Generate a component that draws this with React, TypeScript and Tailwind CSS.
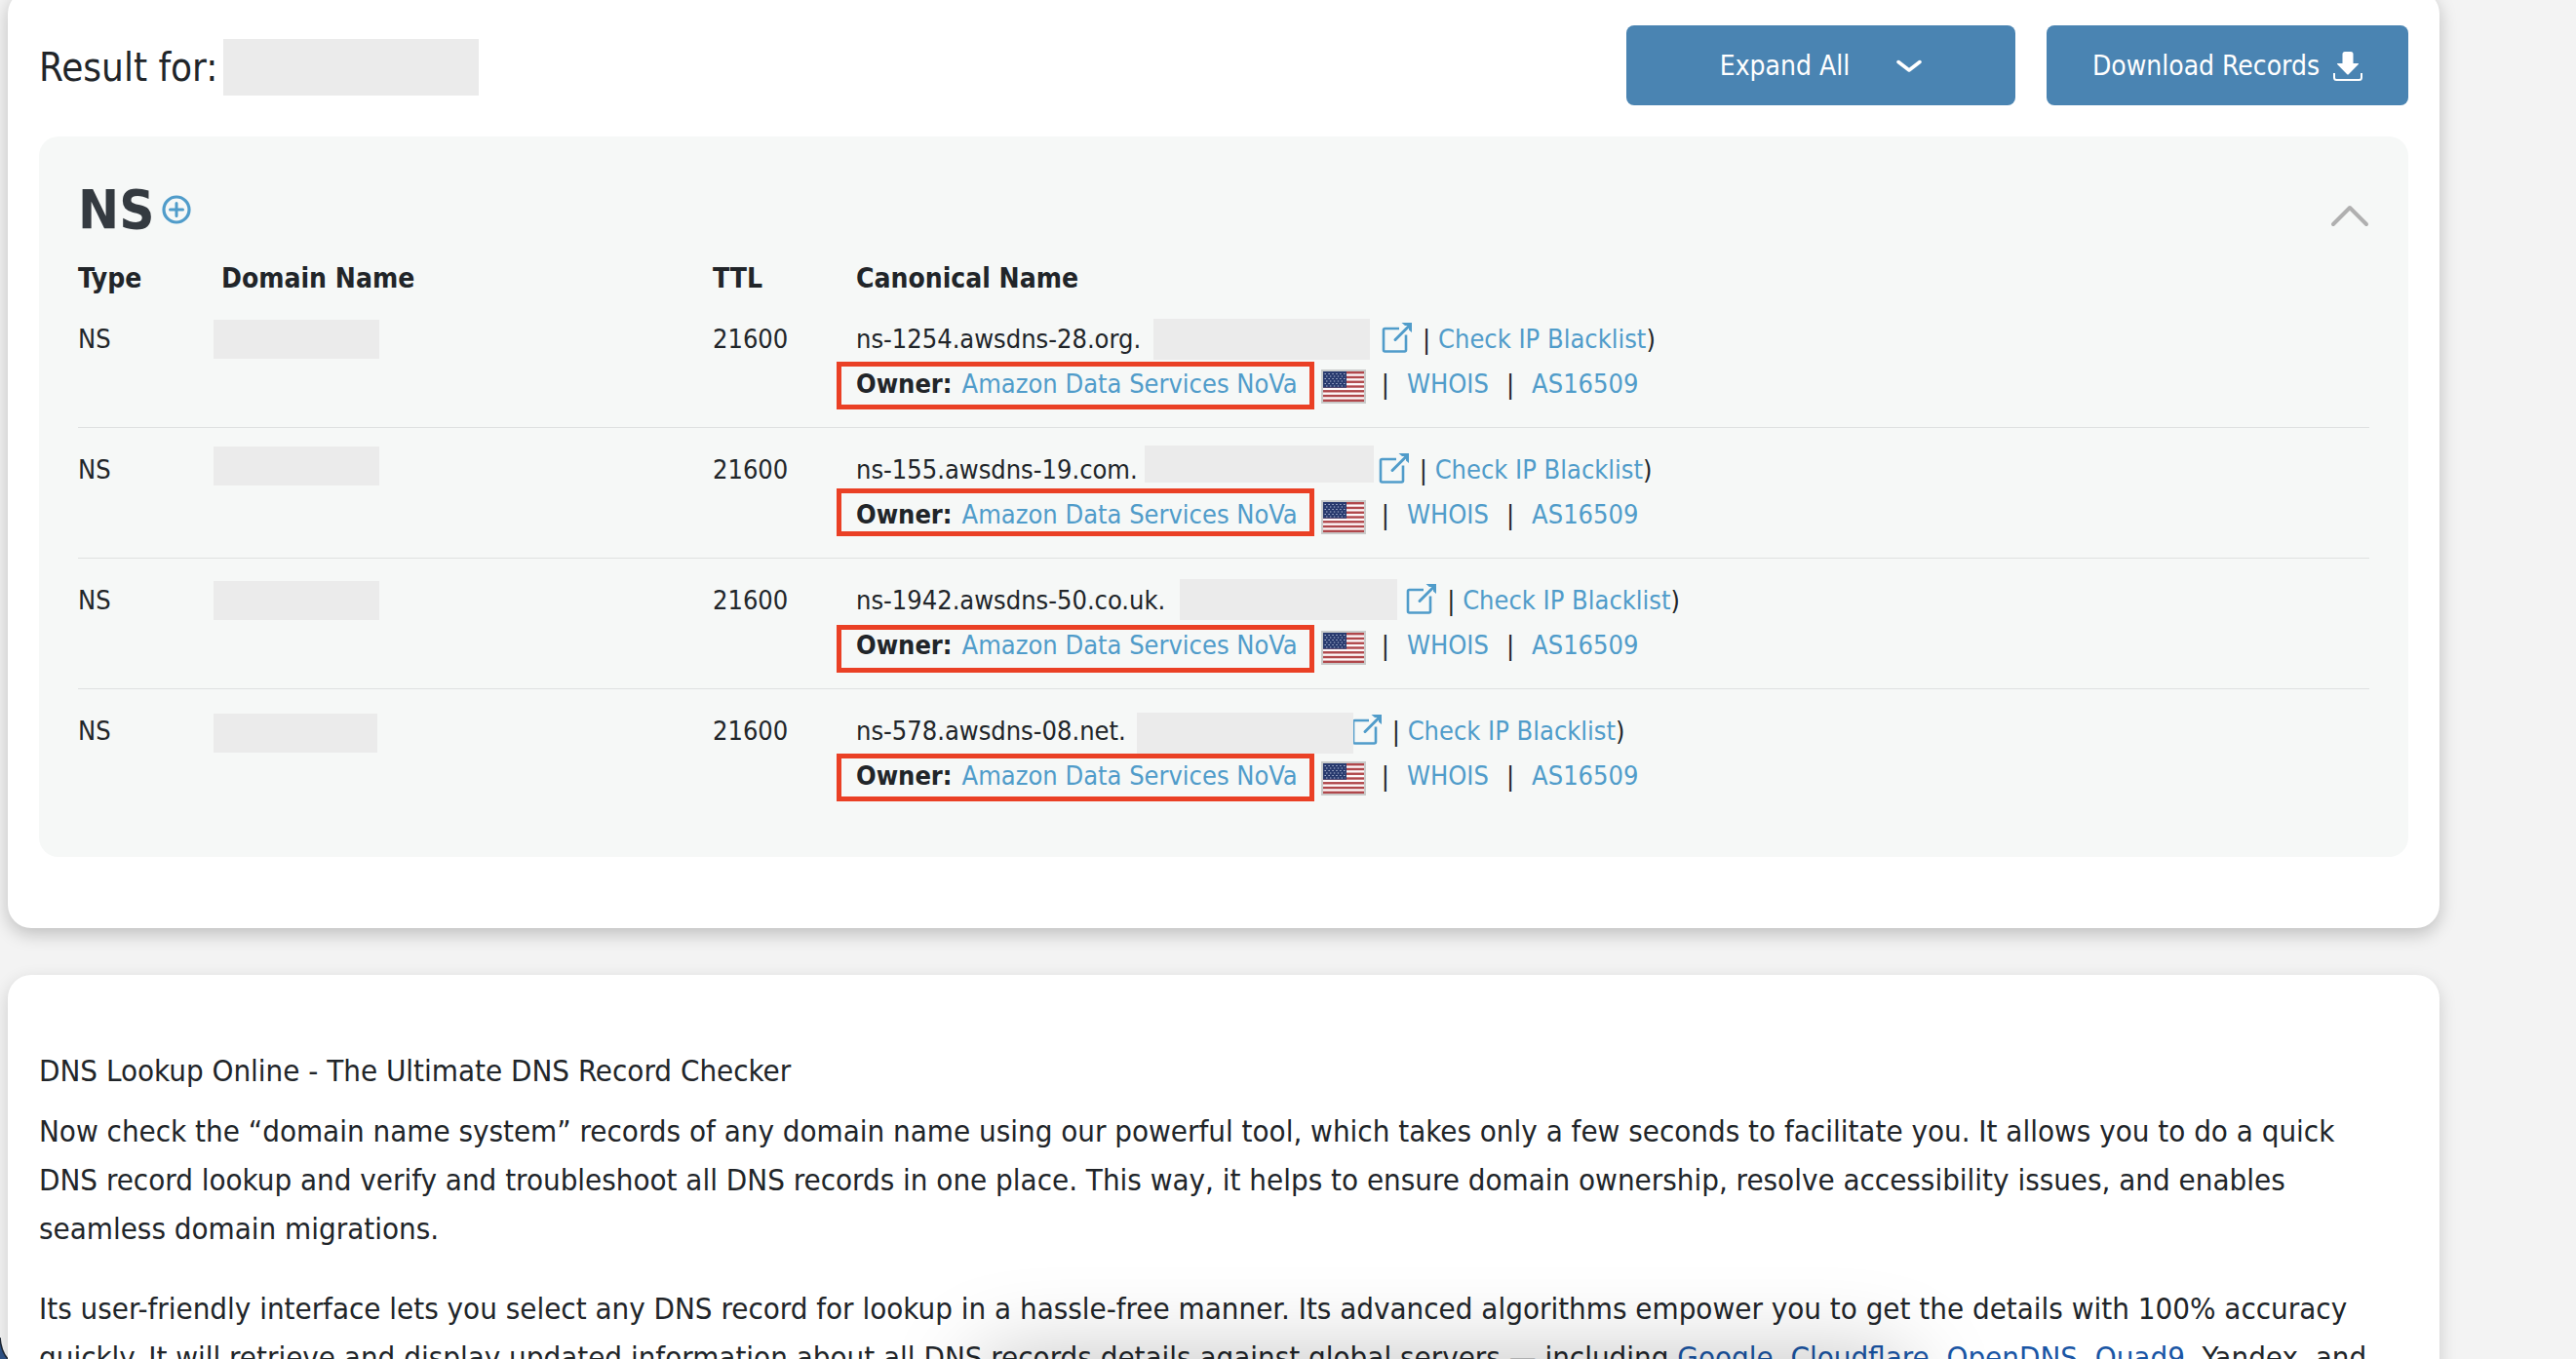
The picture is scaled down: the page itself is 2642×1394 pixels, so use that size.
type DnsRecord = {
  host: string;
  domainMask: string;
  slot: string;
  slotText?: string;
  ipMask: string;
  frame: string;
};

const records: DnsRecord[] = [
  {
    host: "ns-1254.awsdns-28.org.",
    domainMask: "top-[23px] h-10 w-[170px]",
    slot: "w-[247px]",
    ipMask: "left-[305px] top-[22px] h-[42px] w-[222px]",
    frame: "top-[66px]",
  },
  {
    host: "ns-155.awsdns-19.com.",
    domainMask: "top-[19px] h-10 w-[170px]",
    slot: "w-[247px]",
    slotText: "(",
    ipMask: "left-[296px] top-[18px] h-[38px] w-[235px]",
    frame: "top-[62px]",
  },
  {
    host: "ns-1942.awsdns-50.co.uk.",
    domainMask: "top-[23px] h-10 w-[170px]",
    slot: "w-[247px]",
    ipMask: "left-[332px] top-[21px] h-[42px] w-[223px]",
    frame: "top-[68px]",
  },
  {
    host: "ns-578.awsdns-08.net.",
    domainMask: "top-[25px] h-10 w-[168px]",
    slot: "w-[231px]",
    ipMask: "left-[288px] top-[24px] h-[42px] w-[222px]",
    frame: "top-[66px]",
  },
];

const starRows = [4.5, 7, 9.5, 12, 14.5, 17];
const stripes = [0, 1, 2, 3, 4, 5, 6];

function UsFlag() {
  return (
    <svg viewBox="0 0 46 35" className="h-[35px] w-[46px]" role="img" aria-label="United States">
      <rect width="46" height="35" fill="#c9cbca" />
      <rect x="2" y="2" width="42" height="31" fill="#fdf9fa" />
      {stripes.map((i) => (
        <rect key={i} x="2" y={2 + i * 4.77} width="42" height="2.4" fill="#b0474b" />
      ))}
      <rect x="2" y="2" width="24" height="16.7" fill="#283a6e" />
      {starRows.map((y, i) => (
        <path
          key={y}
          d={`M${i % 2 ? 5 : 3.5} ${y}H25`}
          stroke="#a9b3cf"
          strokeWidth="1.2"
          strokeDasharray="1.5 2.4"
        />
      ))}
    </svg>
  );
}

function ExternalIcon() {
  return (
    <svg viewBox="0 0 32 32" className="mb-1 h-8 w-8" fill="none" stroke="#509cca" aria-hidden="true">
      <path d="M18 7H3.5Q2 7 2 8.500V29Q2 30.500 3.500 30.500H23.500Q25 30.500 25 29V13.500" strokeWidth="2.600" />
      <path d="M14 18.500L29 3.500" strokeWidth="3" strokeLinecap="round" />
      <path d="M20.500 1H31V11L28 8.500V4H24Z" fill="#509cca" stroke="none" />
    </svg>
  );
}

const Bar = () => <span className="text-[#212529]">|</span>;

export default function App() {
  return (
    <div
      className="relative h-screen overflow-hidden bg-[#f3f3f3] pl-2 pr-[140px] text-[#212529]"
      style={{ fontFamily: '"DejaVu Sans Condensed", "DejaVu Sans", sans-serif' }}
    >
      <section className="-mt-2.5 rounded-3xl bg-white px-8 pb-[73px] pt-9 shadow-[0_6px_18px_rgba(0,0,0,0.22)]">
        <header className="mb-8 flex items-center justify-between">
          <h1 className="flex items-center gap-1.5 pt-1 text-[40px] leading-[58px]">
            Result for:
            <span className="h-[58px] w-[262px] bg-[#ebebeb]" />
          </h1>
          <div className="flex gap-8 text-[28px] text-white">
            <button className="flex h-[82px] w-[399px] items-center justify-center gap-12 rounded-lg bg-[#4a84b2] pt-0.5">
              Expand All
              <svg viewBox="0 0 26 14" className="h-3.5 w-[26px]" fill="none" stroke="white" strokeWidth="3.500" strokeLinecap="round" strokeLinejoin="round" aria-hidden="true">
                <path d="M2 2.500L13 11L24 2.500" />
              </svg>
            </button>
            <button className="flex h-[82px] w-[371px] items-center justify-center gap-3.5 rounded-lg bg-[#4a84b2] pt-0.5">
              Download Records
              <svg viewBox="0 0 30 30" className="h-[30px] w-[30px]" aria-hidden="true">
                <path d="M9.500 2.500Q9.500 0 12 0H18Q20.500 0 20.500 2.500V12H25.500Q26.500 12 25.800 13L16 23Q15 24 14 23L4.200 13Q3.500 12 4.500 12H9.500Z" fill="white" />
                <path d="M1 22V26.500Q1 29 3.500 29H26.500Q29 29 29 26.500V22" fill="none" stroke="white" strokeWidth="2" />
              </svg>
            </button>
          </div>
        </header>

        <div className="rounded-[20px] bg-[#f6f8f7] px-10 pb-[38px] pt-10">
          <div className="flex items-center justify-between">
            <h2 className="flex items-center gap-2 text-[56px] font-bold leading-[70px] text-[#343a40]">
              NS
              <button aria-label="Add NS record">
                <svg viewBox="0 0 30 30" className="h-[30px] w-[30px]" fill="none" stroke="#509cca" strokeLinecap="round" aria-hidden="true">
                  <circle cx="15" cy="15" r="13" strokeWidth="3.200" />
                  <path d="M15 8.500V21.500M8.500 15H21.500" strokeWidth="3" />
                </svg>
              </button>
            </h2>
            <button className="pt-3" aria-label="Collapse NS records">
              <svg viewBox="0 0 40 24" className="h-6 w-10" fill="none" stroke="#b0b0b0" strokeWidth="4" strokeLinecap="round" strokeLinejoin="round" aria-hidden="true">
                <path d="M3 21L20 4L37 21" />
              </svg>
            </button>
          </div>

          <table className="w-full table-fixed border-separate border-spacing-0 text-left text-[27px] leading-[46px]">
            <thead>
              <tr className="text-[28px] leading-[39px]">
                <th className="w-[147px] pt-4">Type</th>
                <th className="w-[504px] pt-4">Domain Name</th>
                <th className="w-[147px] pt-4">TTL</th>
                <th className="pt-4">Canonical Name</th>
              </tr>
            </thead>
            <tbody className="align-top [&>tr:last-child>td]:border-transparent">
              {records.map((r) => (
                <tr key={r.host}>
                  <td className="border-b border-[#dfe1e1] pt-5">NS</td>
                  <td className="relative border-b border-[#dfe1e1] pt-5">
                    <span className={`absolute -left-2 bg-[#ebebeb] ${r.domainMask}`} />
                  </td>
                  <td className="border-b border-[#dfe1e1] pt-5">21600</td>
                  <td className="relative whitespace-nowrap border-b border-[#dfe1e1] pb-[21px] pt-5">
                    <div className="flex h-[46px] items-center">
                      {r.host}
                      <span className={`pl-2 ${r.slot}`}>{r.slotText}</span>
                      <a href="#lookup" aria-label="Open IP lookup">
                        <ExternalIcon />
                      </a>
                      <span className="pl-2.5">
                        <Bar /> <a href="#blacklist" className="text-[#509cca]">Check IP Blacklist</a>)
                      </span>
                    </div>
                    <div className="flex h-[46px] items-center">
                      <b className="pr-2.5">Owner:</b>
                      <a href="#owner" className="text-[#509cca]">Amazon Data Services NoVa</a>
                      <span className="ml-6 mt-1">
                        <UsFlag />
                      </span>
                      <span className="flex gap-[18px] pl-4">
                        <Bar />
                        <a href="#whois" className="text-[#509cca]">WHOIS</a>
                        <Bar />
                        <a href="#asn" className="text-[#509cca]">AS16509</a>
                      </span>
                    </div>
                    <span className={`pointer-events-none absolute -left-5 h-[49px] w-[490px] border-[5px] border-[#ea4025] ${r.frame}`} />
                    <span className={`absolute bg-[#ebebeb] ${r.ipMask}`} />
                  </td>
                </tr>
              ))}
            </tbody>
          </table>
        </div>
      </section>

      <section className="mt-12 rounded-3xl bg-white px-8 pb-16 pt-[73px] text-[31px] leading-[50px] shadow-[0_6px_18px_rgba(0,0,0,0.16)]">
        <h3 className="mb-3">DNS Lookup Online - The Ultimate DNS Record Checker</h3>
        <p className="mb-8 pr-8">
          Now check the “domain name system” records of any domain name using our powerful tool, which takes only a few
          seconds to facilitate you. It allows you to do a quick DNS record lookup and verify and troubleshoot all DNS
          records in one place. This way, it helps to ensure domain ownership, resolve accessibility issues, and enables
          seamless domain migrations.
        </p>
        <p className="pr-8">
          Its user-friendly interface lets you select any DNS record for lookup in a hassle-free manner. Its advanced
          algorithms empower you to get the details with 100% accuracy quickly. It will retrieve and display updated
          information about all DNS records details against global servers — including{" "}
          <a href="#google" className="text-[#1a56a5] underline">Google</a>,{" "}
          <a href="#cloudflare" className="text-[#1a56a5] underline">Cloudflare</a>,{" "}
          <a href="#opendns" className="text-[#1a56a5] underline">OpenDNS</a>,{" "}
          <a href="#quad9" className="text-[#1a56a5] underline">Quad9</a>, Yandex, and
        </p>
      </section>

      <div className="pointer-events-none absolute left-[38%] right-[26%] top-full h-24 rounded-3xl shadow-[0_0_90px_rgba(0,0,0,0.25)]" />
      <svg viewBox="0 0 8 22" className="absolute bottom-0 left-0 h-[22px] w-2" aria-hidden="true">
        <path d="M0 0Q1 14 8 22H0Z" fill="#2c4f82" />
        <path d="M0 0Q1 14 8 22" fill="none" stroke="#1b2430" strokeWidth="1.500" />
      </svg>
    </div>
  );
}
